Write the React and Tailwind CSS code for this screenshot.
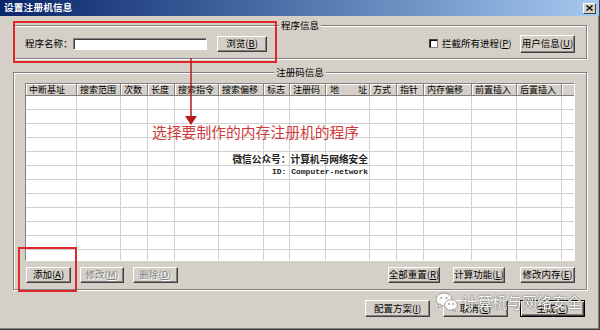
import React from "react";

const columns = [
  { label: "中断基址", w: "w-[51px]" },
  { label: "搜索范围", w: "w-[44px]" },
  { label: "次数", w: "w-[27px]" },
  { label: "长度", w: "w-[27px]" },
  { label: "搜索指令", w: "w-[44px]" },
  { label: "搜索偏移", w: "w-[45px]" },
  { label: "标志", w: "w-[26px]" },
  { label: "注册码", w: "w-[36px]" },
  { label: "地址", w: "w-[44px]", spread: true },
  { label: "方式", w: "w-[27px]" },
  { label: "指针", w: "w-[27px]" },
  { label: "内存偏移", w: "w-[48px]" },
  { label: "前置插入", w: "w-[45px]" },
  { label: "后置插入", w: "w-[45px]" },
];

const rows = Array.from({ length: 12 }, (_, i) => i);

// Win classic raised button
const Btn = ({ children, className = "", disabled = false, isDefault = false }) => (
  <button
    type="button"
    className={`${className} shrink-0 flex items-center justify-center bg-[#d4d0c8] text-[9.5px] leading-none whitespace-nowrap ${
      isDefault
        ? "border border-black shadow-[inset_1px_1px_0_#fff,inset_-1px_-1px_0_#404040,inset_-2px_-2px_0_#808080]"
        : "border border-t-white border-l-white border-r-[#404040] border-b-[#404040] shadow-[inset_-1px_-1px_0_#808080]"
    } ${disabled ? "text-[#808080] [text-shadow:1px_1px_0_#fff]" : "text-black"}`}
  >
    {children}
  </button>
);

const GroupLabel = ({ children }) => (
  <span className="absolute -top-[7px] left-1/2 -translate-x-1/2 bg-[#d4d0c8] px-[2px] text-[9.5px] leading-[12px] whitespace-nowrap text-black">
    {children}
  </span>
);

const WeChatIcon = () => (
  <svg width="24" height="22" viewBox="0 0 24 22">
    <ellipse cx="9" cy="8.5" rx="8" ry="6.5" fill="#fff" stroke="#9a9a9a" strokeWidth="1" />
    <path d="M4 13 L3 17 L7.5 14.5 Z" fill="#fff" stroke="#9a9a9a" strokeWidth="1" />
    <circle cx="6.3" cy="7" r="1" fill="#9a9a9a" />
    <circle cx="11.5" cy="7" r="1" fill="#9a9a9a" />
    <ellipse cx="16" cy="14" rx="6.5" ry="5.3" fill="#fff" stroke="#9a9a9a" strokeWidth="1" />
    <path d="M19.5 18 L21 21 L17 19 Z" fill="#fff" stroke="#9a9a9a" strokeWidth="1" />
    <circle cx="14" cy="13" r="0.9" fill="#9a9a9a" />
    <circle cx="18.2" cy="13" r="0.9" fill="#9a9a9a" />
  </svg>
);

export default function App() {
  return (
    <div className="relative w-[600px] h-[330px] overflow-hidden bg-[#d4d0c8] border-r border-b border-[#404040] shadow-[inset_-1px_-1px_0_#808080] font-['Noto_Sans_CJK_SC',sans-serif] text-black">
      {/* Title bar */}
      <div className="h-[16px] flex items-center bg-linear-to-r from-[#0a246a] to-[#a6caf0] pl-[4px]">
        <span className="text-white font-bold text-[9.6px] leading-none tracking-[0.2px]">设置注册机信息</span>
        <div className="ml-auto mr-[3px] w-[13px] h-[11px] flex items-center justify-center bg-[#d4d0c8] border border-t-white border-l-white border-r-[#404040] border-b-[#404040]">
          <svg width="7" height="6" viewBox="0 0 7 6">
            <path d="M0.5 0.5 L6.5 5.5 M6.5 0.5 L0.5 5.5" stroke="#000" strokeWidth="1.4" />
          </svg>
        </div>
      </div>

      {/* 程序信息 */}
      <div className="relative ml-[13px] mt-[9px] w-[574px] h-[34px] border border-[#808080] shadow-[1px_1px_0_#fff,inset_1px_1px_0_#fff] flex items-center pl-[11px] pr-[11px] pt-[3px]">
        <GroupLabel>程序信息</GroupLabel>
        <span className="w-[48px] shrink-0 text-[9.5px] leading-none whitespace-nowrap">程序名称：</span>
        <input
          className="w-[134px] h-[12px] shrink-0 bg-white border border-t-[#808080] border-l-[#808080] border-r-white border-b-white shadow-[inset_1px_1px_0_#404040] outline-none"
          readOnly
        />
        <Btn className="ml-[10px] w-[50px] h-[16px]">
          浏览(<u>B</u>)
        </Btn>
        <div className="ml-auto flex items-center mr-[12px]">
          <span className="w-[9px] h-[9px] shrink-0 bg-white border border-t-[#404040] border-l-[#404040] border-r-[#808080] border-b-[#808080] shadow-[inset_1px_1px_0_#000]" />
          <span className="ml-[4px] w-[66px] text-[9.5px] leading-none whitespace-nowrap">
            拦截所有进程(<u>P</u>)
          </span>
        </div>
        <Btn className="w-[55px] h-[18px]">
          用户信息(<u>U</u>)
        </Btn>
      </div>

      {/* 注册码信息 */}
      <div className="relative ml-[13px] mt-[13px] w-[574px] h-[218px] border border-[#808080] shadow-[1px_1px_0_#fff,inset_1px_1px_0_#fff] pl-[11px] pt-[10px]">
        <GroupLabel>注册码信息</GroupLabel>

        <div className="w-[550px] h-[178px] bg-white border border-t-[#808080] border-l-[#808080] border-r-white border-b-white overflow-hidden">
          <div className="flex h-[12px]">
            {columns.map((c) => (
              <div
                key={c.label}
                className={`${c.w} shrink-0 h-full flex items-center bg-[#d4d0c8] border-r border-b border-[#808080] shadow-[inset_1px_1px_0_#fff] text-[9px] leading-[10px] whitespace-nowrap ${
                  c.spread ? "justify-between pl-[4px] pr-[2px]" : "pl-[3px]"
                }`}
              >
                {c.spread ? (
                  <>
                    <span>地</span>
                    <span>址</span>
                  </>
                ) : (
                  c.label
                )}
              </div>
            ))}
            <div className="flex-1 h-full bg-[#d4d0c8] border-b border-[#808080] shadow-[inset_1px_1px_0_#fff]" />
          </div>
          {rows.map((r) => (
            <div key={r} className="flex h-[14px]">
              {columns.map((c) => (
                <div key={c.label} className={`${c.w} shrink-0 h-full border-r border-b border-[#d0d0d0]`} />
              ))}
              <div className="flex-1 h-full border-b border-[#d0d0d0]" />
            </div>
          ))}
        </div>

        <div className="mt-[6px] w-[550px] h-[16px] flex justify-between">
          <div className="flex gap-[9px] ml-[1px]">
            <Btn className="w-[45px] h-[16px]">
              添加(<u>A</u>)
            </Btn>
            <Btn className="w-[44px] h-[16px]" disabled>
              修改(<u>M</u>)
            </Btn>
            <Btn className="w-[45px] h-[16px]" disabled>
              删除(<u>D</u>)
            </Btn>
          </div>
          <div className="flex">
            <Btn className="w-[52px] h-[16px]">
              全部重置(<u>R</u>)
            </Btn>
            <Btn className="ml-[13px] w-[52px] h-[16px]">
              计算功能(<u>L</u>)
            </Btn>
            <Btn className="ml-[15px] w-[55px] h-[16px]">
              修改内存(<u>E</u>)
            </Btn>
          </div>
        </div>
      </div>

      {/* Dialog buttons */}
      <div className="mt-[10px] h-[17px] flex justify-end pr-[14px]">
        <Btn className="w-[65px] h-[17px]">
          配置方案(<u>I</u>)
        </Btn>
        <Btn className="ml-[13px] w-[65px] h-[17px]">
          取消(<u>C</u>)
        </Btn>
        <Btn className="ml-[12px] w-[65px] h-[17px]" isDefault>
          生成(<u>G</u>)
        </Btn>
      </div>

      {/* Annotations */}
      <div className="absolute left-[13px] top-[21px] w-[264px] h-[42px] border-2 border-[#e0282a]" />
      <div className="absolute left-[18px] top-[247px] w-[59px] h-[45px] border-2 border-[#e0282a]" />
      <svg className="absolute left-[184px] top-[58px]" width="14" height="68" viewBox="0 0 14 68">
        <line x1="7" y1="0" x2="7" y2="59" stroke="#b41c1c" strokeWidth="1.5" />
        <path d="M1 58 L13 58 L7 67 Z" fill="#b41c1c" />
      </svg>
      <div className="absolute left-[152px] top-[123px] text-[14.8px] leading-[18px] text-[#cf3b3b] whitespace-nowrap">
        选择要制作的内存注册机的程序
      </div>
      <div className="absolute left-[222px] top-[153px] w-[146px] text-right text-[9.7px] leading-[12px] font-semibold text-[#222] whitespace-nowrap">
        微信公众号：计算机与网络安全
      </div>
      <div className="absolute left-[222px] top-[166px] w-[146px] text-right font-['Liberation_Mono',monospace] font-bold text-[8px] leading-[12px] text-[#222] whitespace-nowrap">
        ID: Computer-network
      </div>

      {/* Watermark */}
      <div className="absolute left-[435px] top-[291px] flex items-center opacity-90">
        <WeChatIcon />
        <span className="ml-[3px] text-[15px] leading-[20px] text-white whitespace-nowrap [text-shadow:0_0_1px_#444,0_0_2px_#666]">
          计算机与网络安全
        </span>
      </div>
    </div>
  );
}
